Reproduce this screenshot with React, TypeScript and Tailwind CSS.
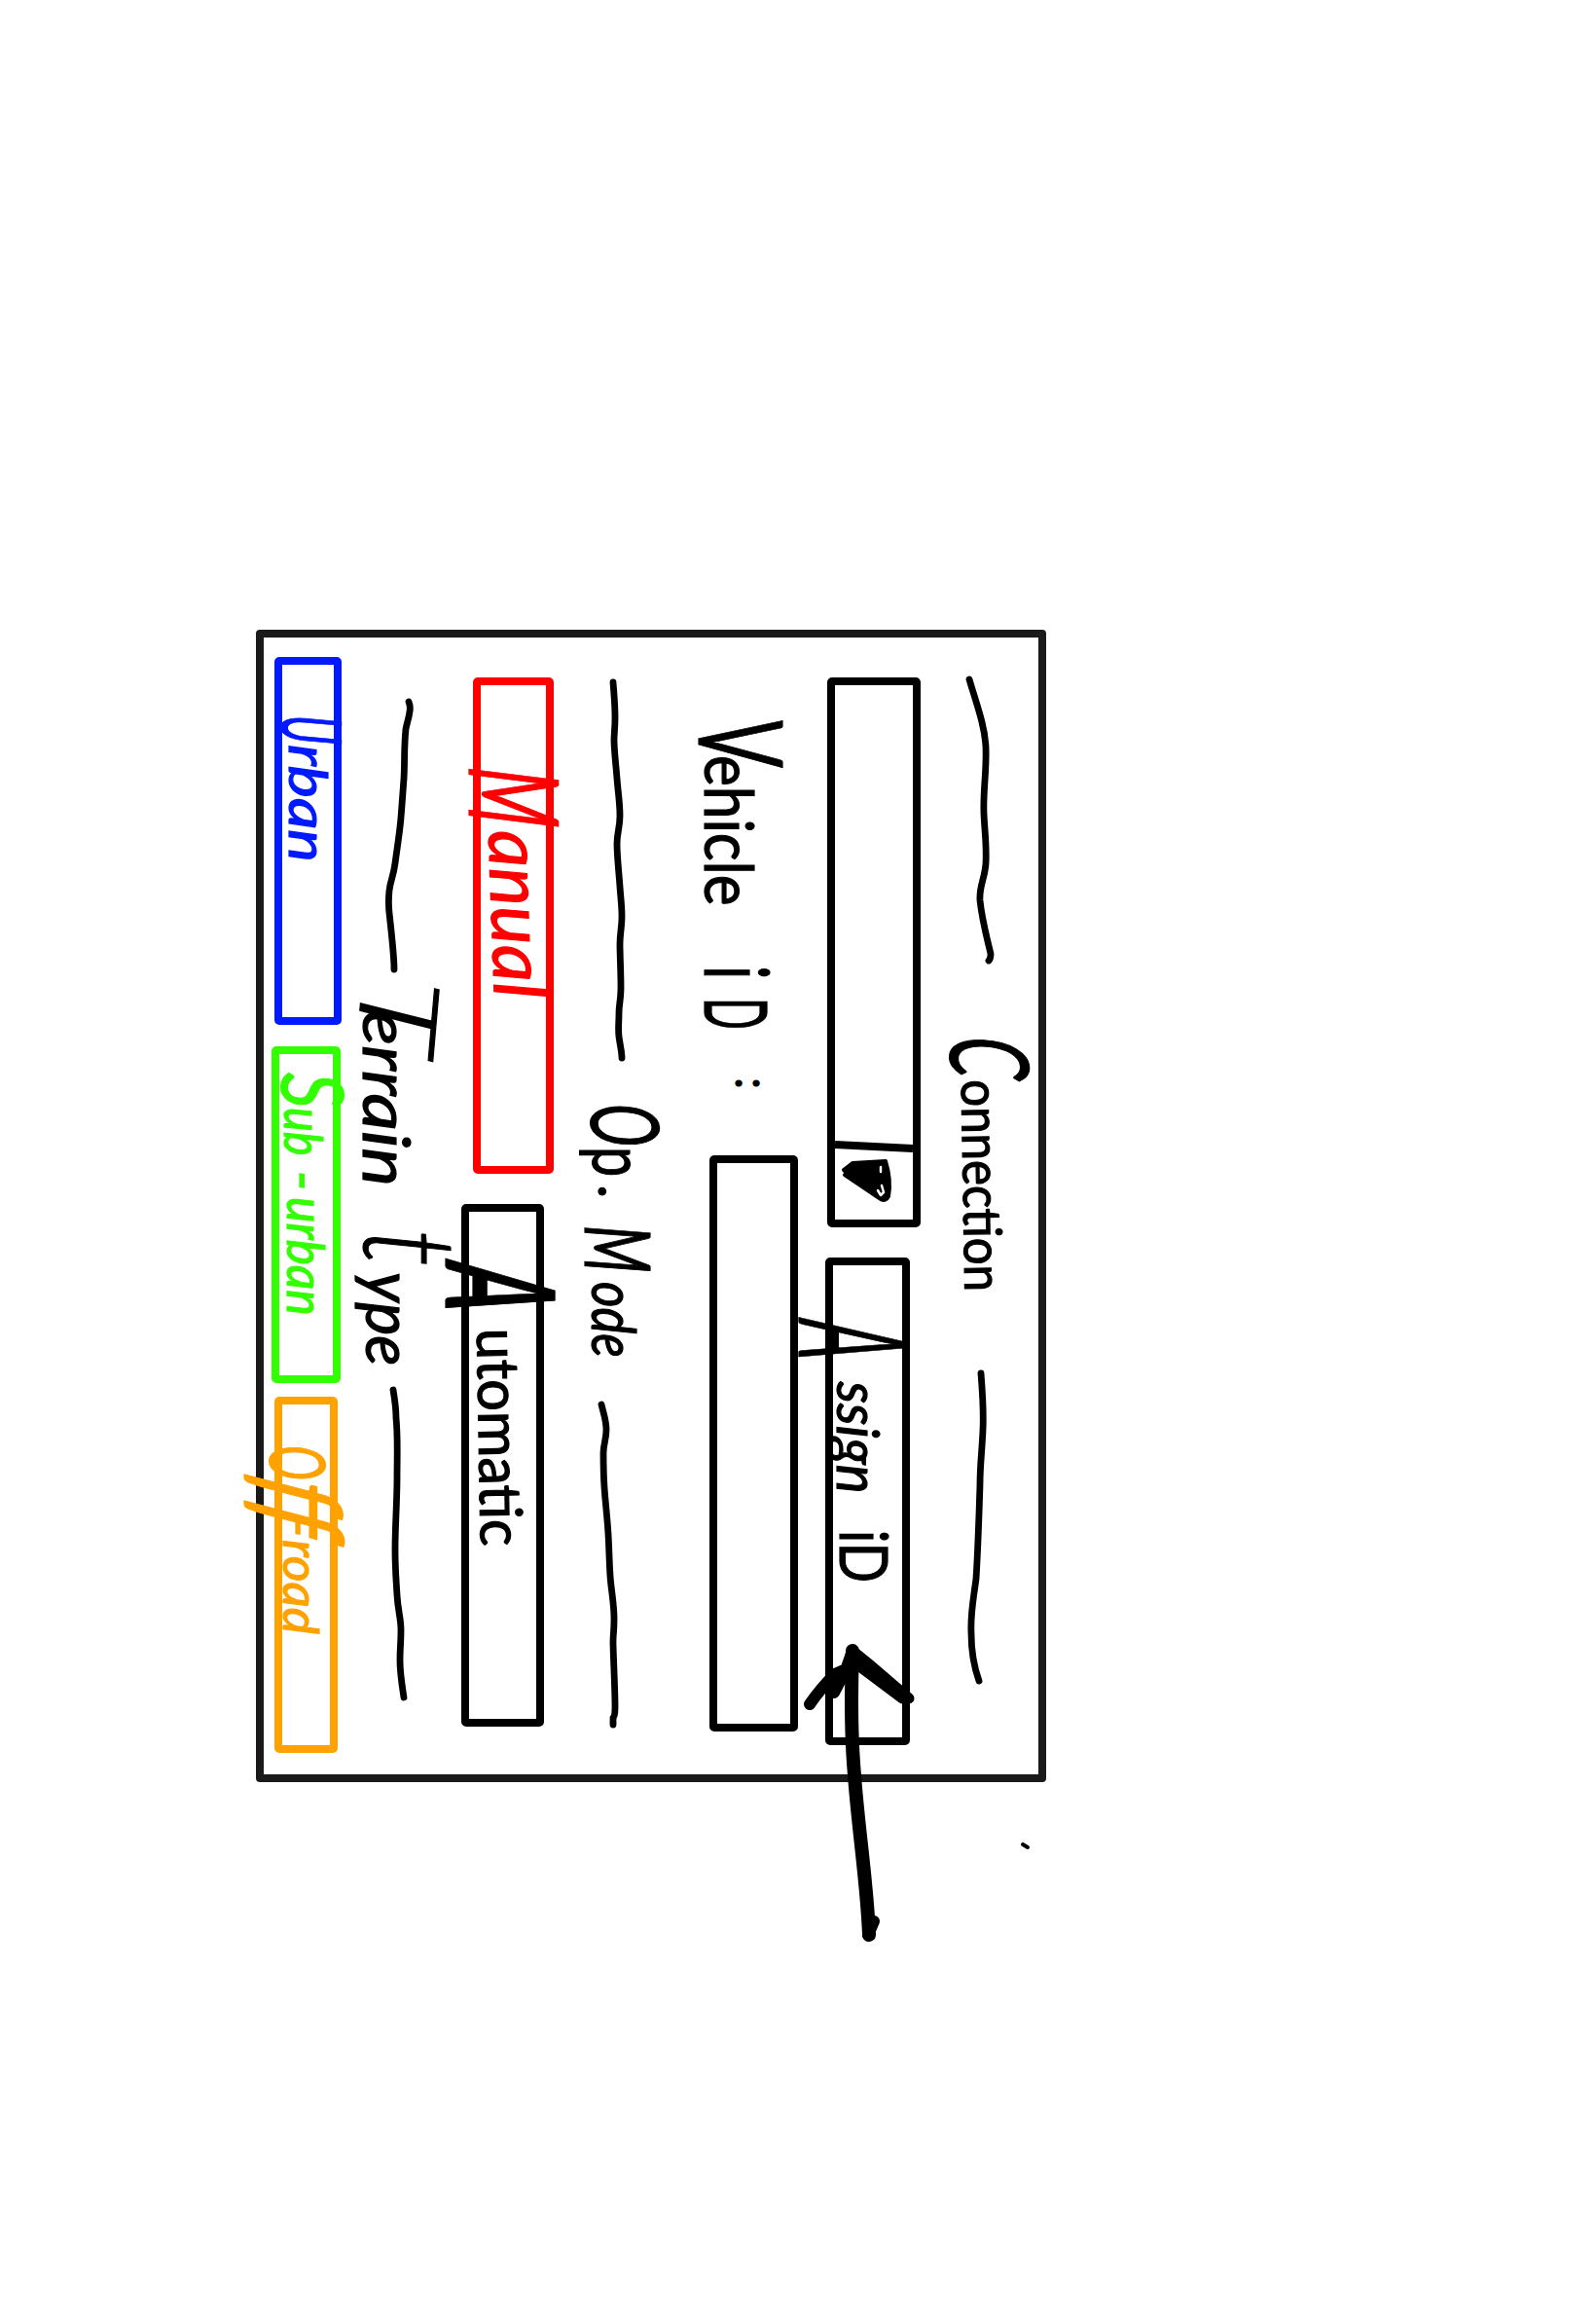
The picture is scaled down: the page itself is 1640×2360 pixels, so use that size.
import React from "react";

type InkProps = { className: string; children: React.ReactNode };

/* One run of lettering; its box keeps the given width while the glyphs are condensed. */
function Ink({ className, children }: InkProps) {
  return <span className={`block origin-bottom-left whitespace-pre leading-none ${className}`}>{children}</span>;
}

function Label({ className, children }: InkProps) {
  return <div className={`flex h-0 shrink-0 items-baseline ${className}`}>{children}</div>;
}

type RuleProps = { x: number; w: number; y: number; d: string; className: string };

/* Wavy divider stroke, in panel coordinates. */
function Rule({ x, w, y, d, className }: RuleProps) {
  return (
    <svg viewBox={`${x} ${y} ${w} 40`} className={`h-[40px] shrink-0 overflow-visible ${className}`} aria-hidden="true">
      <path d={d} fill="none" stroke="#000" strokeWidth="6.8" strokeLinecap="round" strokeLinejoin="round" />
    </svg>
  );
}

export default function App() {
  return (
    <main className="relative h-[2360px] w-[1640px] overflow-hidden bg-white font-['Lato','Open_Sans',sans-serif] text-black [-webkit-text-stroke-width:1.2px] [stroke-linejoin:round]">
      <div className="h-[647px]" />
      <section className="ml-[1075px] flex h-[812px] w-[1184px] origin-top-left rotate-90 flex-col rounded-[4px] border-8 border-[#1a1a1a]">
        <header className="flex h-[121px] shrink-0 items-start">
          <Rule x={51} w={284} y={50} className="ml-[43px] mt-[42px] w-[284px]"
            d="M51 79C75 72 98 63 121 62C145 61 165 65 189 64C210 63 222 61 240 62C256 63 263 69 278 68C298 66 316 61 333 57Q338 57 340 59" />
          <Label className="ml-[79px] mt-[-11px] w-[350px] -rotate-[1deg]">
            <Ink className="w-[47px] -skew-x-6 scale-x-[.62] text-[112px] italic">C</Ink>
            <Ink className="w-[217px] -translate-y-[11px] scale-x-[.91] text-[54px]">onnection</Ink>
          </Label>
          <Rule x={765} w={316} y={50} className="mt-[42px] w-[316px]"
            d="M765 67C790 65 803 64 823 65C846 66 860 68 879 68C912 69 944 70 976 72C999 75 1012 78 1032 77C1052 77 1067 74 1081 69" />
        </header>

        <div className="flex h-[98px] shrink-0 items-start">
          <div className="ml-[41px] flex h-[96px] w-[565px] shrink-0 rounded-[5px] border-8 border-black">
            <svg viewBox="57 137 549 80" className="h-full w-full overflow-visible" aria-hidden="true">
              <path d="M529 217L533 137" stroke="#000" strokeWidth="8" />
              <path d="M555 208L548 199L546 165Q565 159 582 162Q588 165 585 170L560 207L562 201L555 208Z" fill="#000" stroke="#000" strokeWidth="4" strokeLinejoin="round" />
              <path d="M552 170L557 170M571 169L578 167L581 170L576 173" fill="none" stroke="#fff" strokeWidth="2.5" strokeLinecap="round" />
            </svg>
          </div>
          <button className="ml-[31px] mt-[11px] flex h-[87px] w-[501px] shrink-0 items-start rounded-[5px] border-8 border-black">
            <Label className="ml-[55px] mt-[-29px]">
              <Ink className="w-[38px] -skew-x-3 scale-x-[.43] text-[152px] italic">A</Ink>
              <Ink className="w-[179px] -translate-y-[39px] scale-x-[.94] text-[60px] italic">ssign</Ink>
              <Ink className="w-[60px] -translate-y-[42px] scale-x-[.8] text-[68px]">iD</Ink>
            </Label>
          </button>
        </div>

        <div className="flex h-[119px] shrink-0 items-start">
          <Label className="ml-[82px] mt-[24px] w-[450px]">
            <Ink className="w-[39px] -skew-x-3 scale-x-[.6] text-[120px]">V</Ink>
            <Ink className="w-[216px] -translate-y-[6px] scale-x-[.86] text-[70px]">ehicle</Ink>
            <Ink className="w-[33px] -translate-y-[6px] scale-x-[.65] text-[92px]">i</Ink>
            <Ink className="w-[82px] -translate-y-[6px] scale-x-[.48] text-[90px]">D</Ink>
            <Ink className="-translate-y-[38px] text-[48px]">:</Ink>
          </Label>
          <div className="mt-[28px] h-[91px] w-[592px] shrink-0 rounded-[5px] border-8 border-black" />
        </div>

        <header className="flex h-[160px] shrink-0 items-start">
          <Rule x={54} w={386} y={420} className="ml-[46px] mt-[74px] w-[386px]"
            d="M54 445C67 444 77 443 90 443S105 444 114 444S140 442 153 441S178 438 191 438S208 441 220 441S250 439 264 438S284 436 295 436S312 438 323 438S352 437 367 437S384 439 394 439S410 440 418 439S434 436 440 436" />
          <Label className="ml-[47px] mt-[35px] w-[309px]">
            <Ink className="w-[44px] scale-x-[.6] text-[98px] italic">O</Ink>
            <Ink className="w-[39px] -translate-y-[2px] scale-x-[.74] text-[75px]">p</Ink>
            <Ink className="w-[42px] -translate-y-[8px] text-[60px]">.</Ink>
            <Ink className="w-[58px] translate-y-[6px] scale-x-[.6] text-[94px] italic">M</Ink>
            <Ink className="w-[88px] -translate-y-[1px] scale-x-[.82] text-[62px] italic">ode</Ink>
          </Label>
          <Rule x={796} w={329} y={420} className="mt-[74px] w-[329px]"
            d="M796 457C805 455 812 452 822 452S837 455 846 455S866 455 881 454S912 451 929 450S957 449 972 448S1000 444 1016 444S1030 445 1040 445S1088 443 1107 443Q1116 443 1118 445L1125 445" />
        </header>

        <div className="flex h-[95px] shrink-0 items-start">
          <button className="ml-[41px] flex h-[83px] w-[510px] shrink-0 items-start rounded-[5px] border-8 border-[#ff0000] text-[#ff0000]">
            <Label className="ml-[82px] mt-[-34px]">
              <Ink className="w-[68px] -skew-x-6 scale-x-[.54] text-[128px] italic">M</Ink>
              <Ink className="-translate-y-[20px] -rotate-[2deg] text-[75px] italic">anual</Ink>
            </Label>
          </button>
          <button className="ml-[31px] mt-[10px] flex h-[85px] w-[537px] shrink-0 items-start rounded-[5px] border-8 border-black">
            <Label className="ml-[50px] mt-[-44px]">
              <Ink className="w-[70px] -skew-x-6 scale-x-[.5] text-[155px] font-bold italic">A</Ink>
              <Ink className="-translate-y-[32px] -rotate-[1deg] scale-x-[.96] text-[60px]">utomatic</Ink>
            </Label>
          </button>
        </div>

        <header className="flex h-[123px] shrink-0 items-start">
          <Rule x={74} w={275} y={640} className="ml-[66px] mt-[39px] w-[275px]"
            d="M74 655Q79 653 84 654C92 655 96 657 102 658C120 660 138 659 153 660S180 662 193 663S225 667 240 669S258 674 268 675S282 676 291 675S335 670 349 670" />
          <Label className="ml-[4px] mt-[-16px] w-[428px]">
            <Ink className="w-[38px] rotate-[5deg] scale-x-[1.3] text-[112px] font-light italic">T</Ink>
            <Ink className="w-[225px] scale-x-[1.14] text-[66px] italic">errain</Ink>
            <Ink className="w-[44px] -translate-y-[1px] scale-x-[.85] text-[132px] font-light italic">t</Ink>
            <Ink className="-translate-y-[3px] scale-x-[.98] text-[66px] italic">ype</Ink>
          </Label>
          <Rule x={781} w={316} y={640} className="mt-[39px] w-[316px]"
            d="M781 671C793 669 800 668 810 668C830 666 850 667 870 667C897 667 920 669 945 669C965 669 975 668 992 667S1015 663 1028 663S1046 664 1059 664S1084 662 1097 660" />
        </header>

        <div className="flex shrink-0 items-start">
          <button className="ml-[20px] flex h-[69px] w-[378px] shrink-0 items-start rounded-[5px] border-8 border-[#0019ff] text-[#0019ff]">
            <Label className="ml-[51px] mt-[-22px]">
              <Ink className="w-[31px] -skew-x-3 scale-x-[.5] text-[86px] italic">U</Ink>
              <Ink className="-translate-y-[8px] scale-x-[1.17] text-[54px] italic">rban</Ink>
            </Label>
          </button>
          <button className="ml-[22px] mt-px flex h-[71px] w-[346px] shrink-0 items-start rounded-[5px] border-8 border-[#33ff00] text-[#33ff00]">
            <Label className="ml-[19px] mt-[-27px]">
              <Ink className="w-[36px] scale-x-[.8] text-[90px] italic">S</Ink>
              <Ink className="w-[58px] -translate-y-[3px] scale-x-[.85] text-[55px] italic">ub</Ink>
              <Ink className="w-[34px] -translate-y-[3px] text-[60px] italic">-</Ink>
              <Ink className="-translate-y-[6px] scale-x-[.94] text-[53px] italic">urban</Ink>
            </Label>
          </button>
          <button className="ml-[14px] mt-[4px] flex h-[65px] w-[366px] shrink-0 items-start rounded-[5px] border-8 border-[#ffa200] text-[#ffa200]">
            <Label className="ml-[42px] mt-[-32px]">
              <Ink className="w-[26px] -translate-y-[12px] scale-x-[.6] text-[80px] italic">O</Ink>
              <Ink className="w-[46px] -translate-y-[1px] -skew-x-12 scale-x-[.78] text-[120px] italic">ff</Ink>
              <Ink className="w-[25px] -translate-y-[24px] text-[56px] italic">-</Ink>
              <Ink className="-translate-y-[26px] scale-x-[1.03] text-[50px] italic">road</Ink>
            </Label>
          </button>
        </div>
      </section>

      {/* Pen annotations laid over the sketch */}
      <svg viewBox="0 0 1640 2360" className="pointer-events-none absolute inset-0 h-full w-full" fill="none" stroke="#000" strokeLinecap="round" strokeLinejoin="round" aria-hidden="true">
        <path d="M876 1696C874 1750 875 1790 878 1824C882 1880 891 1935 893 1988" strokeWidth="14" />
        <path d="M892 1988L898 1974" strokeWidth="12" />
        <path d="M876 1696L892 1709L934 1745" strokeWidth="11" />
        <path d="M884 1710L928 1743" strokeWidth="15" />
        <path d="M876 1696L869 1716L857 1739M876 1712L858 1720Q843 1735 832 1751" strokeWidth="12" />
        <path d="M1051 1895L1056 1898" strokeWidth="4" />
      </svg>
    </main>
  );
}
